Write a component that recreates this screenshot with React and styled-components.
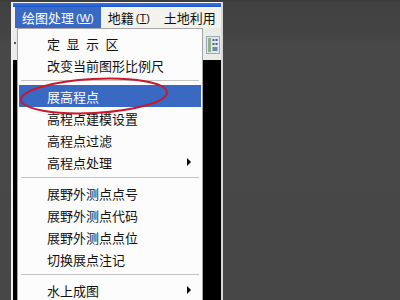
import React from "react";
import styled, { createGlobalStyle } from "styled-components";

const GlobalStyle = createGlobalStyle`
  html, body {
    margin: 0;
    padding: 0;
    background: #464646;
  }
  body {
    font-family: "Noto Sans CJK SC", "Noto Sans", sans-serif;
  }
`;

const menuItems = [
  { label: "定\u2002显\u2002示\u2002区" },
  { label: "改变当前图形比例尺" },
  { sep: true },
  { label: "展高程点", active: true },
  { label: "高程点建模设置" },
  { label: "高程点过滤" },
  { label: "高程点处理", sub: true },
  { sep: true },
  { label: "展野外测点点号" },
  { label: "展野外测点代码" },
  { label: "展野外测点点位" },
  { label: "切换展点注记" },
  { sep: true },
  { label: "水上成图", sub: true },
];

const App = () => {
  return (
    <>
      <GlobalStyle />
      <Page>
        <Shot>
          <TitleStrip />
          <MenuBar>
            <BarItem $active>
              绘图处理<Hotkey>(<u>W</u>)</Hotkey>
            </BarItem>
            <BarItem>
              地籍<Hotkey>(<u>T</u>)</Hotkey>
            </BarItem>
            <BarItem>土地利用</BarItem>
          </MenuBar>
          <Workspace>
            <Toolbar>
              <Grip />
              <ToolButton>
                <svg width="12" height="16" viewBox="0 0 12 16">
                  <rect x="1" y="1" width="3" height="14" fill="#8fb08a" />
                  <rect x="5.5" y="2" width="2" height="2" fill="#4a5f7a" />
                  <rect x="8.5" y="2" width="2" height="2" fill="#4a5f7a" />
                  <rect x="5.5" y="6" width="2" height="2" fill="#4a5f7a" />
                  <rect x="8.5" y="6" width="2" height="2" fill="#4a5f7a" />
                  <rect x="5.5" y="10" width="5" height="4" fill="#6f8aa8" />
                </svg>
              </ToolButton>
            </Toolbar>
            <Canvas />
            <Dropdown>
              {menuItems.map((item, i) =>
                item.sep ? (
                  <Separator key={i} />
                ) : (
                  <MenuItem key={i} $active={item.active}>
                    <span>{item.label}</span>
                    {item.sub && <Arrow />}
                  </MenuItem>
                )
              )}
              <Circle width="160" height="46" viewBox="0 0 160 46">
                <ellipse
                  cx="76"
                  cy="23"
                  rx="73"
                  ry="17"
                  transform="rotate(-3 76 23)"
                  fill="none"
                  stroke="#c8182c"
                  strokeWidth="2"
                />
              </Circle>
            </Dropdown>
          </Workspace>
        </Shot>
      </Page>
    </>
  );
};

export default App;

const Page = styled.div`
  width: 400px;
  height: 300px;
  overflow: hidden;
  box-sizing: border-box;
  padding: 2px 0 0 11px;
  background: linear-gradient(#3a3a3a 0, #414141 3px, #444444 35px, #484848 45px, #474747);
`;

const Shot = styled.div`
  width: 212px;
  height: 310px;
  box-sizing: border-box;
  border-left: 2px solid #f0f0f0;
  border-right: 2px solid #d8d8d8;
  border-top: 1px solid #f4f4f4;
  display: flex;
  flex-direction: column;
  background: #000;
`;

const TitleStrip = styled.div`
  height: 4px;
  background: linear-gradient(#3a78e8, #1f55c8);
`;

const MenuBar = styled.div`
  height: 21px;
  display: flex;
  align-items: stretch;
  padding-left: 2px;
  background: #f3f2ec;
  white-space: nowrap;
  overflow: hidden;
`;

const BarItem = styled.div`
  display: flex;
  align-items: center;
  padding: 0 7px;
  font-size: 13px;
  color: ${(p) => (p.$active ? "#ffffff" : "#111111")};
  background: ${(p) => (p.$active ? "#3a69c4" : "transparent")};
`;

const Hotkey = styled.span`
  font-family: "Liberation Sans", sans-serif;
  font-size: 11px;
  margin-left: 2px;
`;

const Workspace = styled.div`
  position: relative;
  flex: 1;
  display: flex;
  flex-direction: column;
`;

const Toolbar = styled.div`
  height: 32px;
  display: flex;
  align-items: center;
  justify-content: space-between;
  padding: 0 1px 0 1px;
  background: #ebebe8;
`;

const Grip = styled.div`
  width: 2px;
  height: 2px;
  margin-bottom: 2px;
  background: #555;
`;

const ToolButton = styled.div`
  width: 14px;
  height: 18px;
  margin-top: 1px;
  display: flex;
  align-items: center;
  justify-content: center;
  background: #dfe6ee;
  border: 1px solid #9aa8b8;
  box-sizing: border-box;
`;

const Canvas = styled.div`
  flex: 1;
  background: #000;
`;

const Dropdown = styled.div`
  position: absolute;
  left: 4px;
  top: 0;
  width: 186px;
  box-sizing: border-box;
  padding: 3px 1px 0 1px;
  background: #fcfcfc;
  border: 1px solid #a6a6a6;
  border-bottom: none;
  height: 290px;
`;

const MenuItem = styled.div`
  height: 22px;
  display: flex;
  align-items: center;
  padding: 0 10px 0 28px;
  font-size: 13px;
  color: ${(p) => (p.$active ? "#ffffff" : "#111111")};
  background: ${(p) => (p.$active ? "#3a69c4" : "transparent")};
  white-space: nowrap;
`;

const Arrow = styled.span`
  margin-left: auto;
  width: 0;
  height: 0;
  border-left: 4px solid #000;
  border-top: 4px solid transparent;
  border-bottom: 4px solid transparent;
`;

const Separator = styled.div`
  height: 1px;
  margin: 4px 2px;
  background: #c4c4c4;
`;

const Circle = styled.svg`
  position: absolute;
  left: 0;
  top: 44px;
  pointer-events: none;
`;
